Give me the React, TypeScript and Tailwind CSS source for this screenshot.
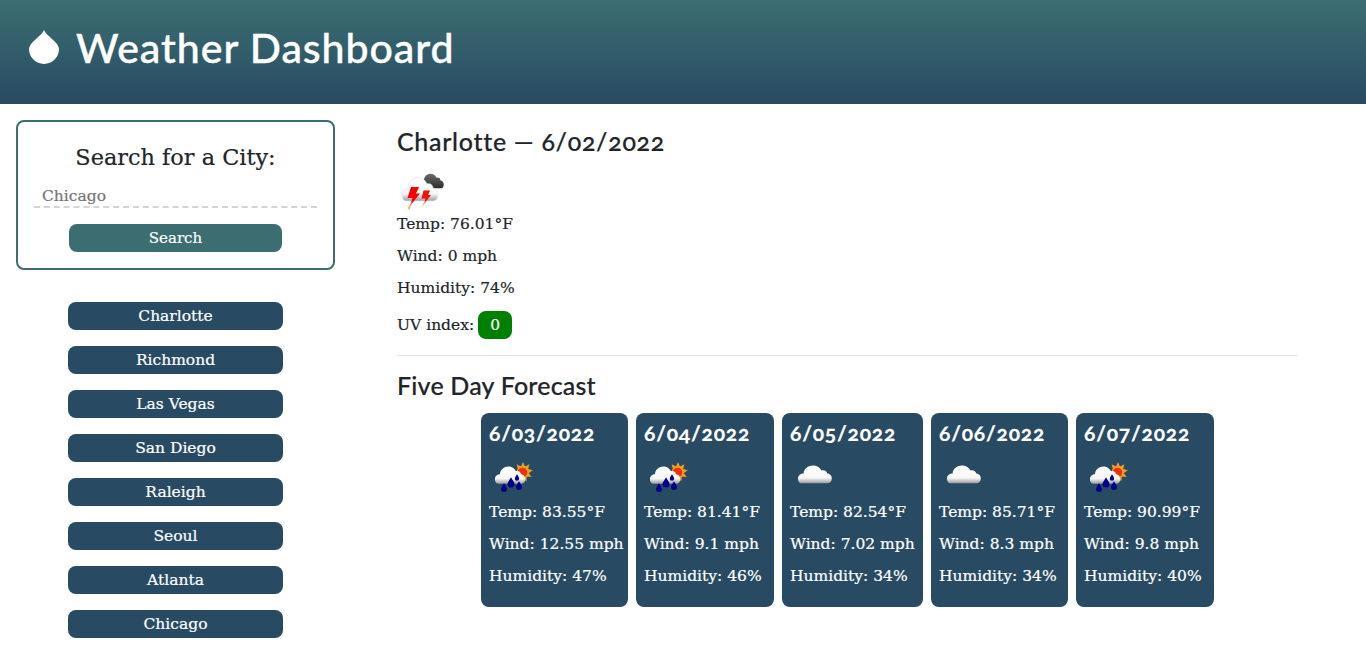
const serif = "font-['DejaVu_Serif',serif]";

function Cloud({ fill, stroke }: { fill?: string; stroke?: string }) {
  return (
    <path
      fill={fill}
      stroke={stroke}
      strokeWidth={stroke ? 0.7 : 0}
      d="M4 24 C1 24 0 21 0 18 C0 14 3 12 6 12 C6 6 11 2 16 2 C20 2 23 4 25 8 C28 7 31 9 31 12 C34 12 36 15 36 18 C36 22 34 24 31 24 Z"
    />
  );
}

function Defs() {
  return (
    <defs>
      <linearGradient id="wc" x1="0" y1="0" x2="0" y2="1">
        <stop offset="0" stopColor="#ffffff" />
        <stop offset="0.7" stopColor="#f7f7f7" />
        <stop offset="1" stopColor="#9c9c9c" />
      </linearGradient>
      <linearGradient id="dc" x1="0" y1="0" x2="0" y2="1">
        <stop offset="0" stopColor="#6b6b6b" />
        <stop offset="1" stopColor="#2b2b2b" />
      </linearGradient>
    </defs>
  );
}

function ThunderIcon() {
  return (
    <svg width="50" height="54" viewBox="0 0 50 54" className="-mb-[4px] block">
      <Defs />
      <g transform="translate(23 15.5) scale(0.66 0.66)">
        <Cloud fill="url(#dc)" />
      </g>
      <g transform="translate(5 18.5) scale(1 1.06)">
        <Cloud fill="url(#wc)" stroke="#e4e4e4" />
      </g>
      <path d="M14 30 L22 30 L19 36.5 L23 36.5 L13 49 L15.5 41 L10.5 41 Z" fill="#f80000" />
      <path d="M13 48 L15.5 44 L12.5 53 L10.5 51 Z" fill="#f8b060" />
      <path d="M26.5 33.5 L33 33.5 L31 38 L34 38 L27 47 L28.5 41.5 L24.5 41.5 Z" fill="#f41000" />
      <path d="M26.5 46 L28.5 44.5 L25 51 Z" fill="#f8b060" />
    </svg>
  );
}

function RainIcon() {
  const drops: [number, number, number][] = [
    [15, 44, 3],
    [22, 39, 3.5],
    [30, 42, 3],
    [28, 33.5, 2.2],
  ];
  return (
    <svg width="50" height="50" viewBox="0 0 50 50" className="block">
      <Defs />
      <g fill="#f0a020">
        {[0, 40, 80, 120, 160, 320].map((a) => (
          <path key={a} d="M34 17 L36 21.5 L32 21.5 Z" transform={`rotate(${a} 34 27)`} />
        ))}
      </g>
      <circle cx="34" cy="27" r="6.2" fill="#f0a020" />
      <circle cx="33.5" cy="27.5" r="4.8" fill="#f03000" />
      <g transform="translate(6 20) scale(0.84 0.78)">
        <Cloud fill="url(#wc)" />
      </g>
      {drops.map(([x, y, r], i) => (
        <path
          key={i}
          d={`M${x} ${y - r * 1.9} C${x + r * 0.5} ${y - r} ${x + r} ${y - r * 0.4} ${x + r} ${y} A${r} ${r} 0 1 1 ${x - r} ${y} C${x - r} ${y - r * 0.4} ${x - r * 0.5} ${y - r} ${x} ${y - r * 1.9} Z`}
          fill="#00008c"
        />
      ))}
    </svg>
  );
}

function CloudIcon() {
  return (
    <svg width="50" height="50" viewBox="0 0 50 50" className="block">
      <Defs />
      <g transform="translate(8 19) scale(0.94 0.8)">
        <Cloud fill="url(#wc)" />
      </g>
    </svg>
  );
}

const cities = ["Charlotte", "Richmond", "Las Vegas", "San Diego", "Raleigh", "Seoul", "Atlanta", "Chicago"];

const days = [
  { date: "6/03/2022", icon: "rain", temp: "83.55", wind: "12.55", hum: "47", w: "w-[147px]" },
  { date: "6/04/2022", icon: "rain", temp: "81.41", wind: "9.1", hum: "46", w: "w-[138px]" },
  { date: "6/05/2022", icon: "cloud", temp: "82.54", wind: "7.02", hum: "34", w: "w-[141px]" },
  { date: "6/06/2022", icon: "cloud", temp: "85.71", wind: "8.3", hum: "34", w: "w-[137px]" },
  { date: "6/07/2022", icon: "rain", temp: "90.99", wind: "9.8", hum: "40", w: "w-[138px]" },
];

export default function App() {
  return (
    <div className={`min-h-[670px] bg-white text-[#212529] ${serif} text-[15.5px] [-webkit-text-stroke:0.2px]`}>
      <header className="flex h-[104px] items-center gap-[17px] bg-gradient-to-b from-[#3c6e71] to-[#284b63] pl-[29px] font-['Lato',sans-serif] text-white">
        <svg width="30" height="34" viewBox="0 0 30 34" className="mt-[-10px]">
          <path d="M15 0 C17 6 30 12 30 19 A15 15 0 0 1 0 19 C0 12 13 6 15 0 Z" fill="#fff" />
        </svg>
        <h1 className="mb-[8px] text-[41px] font-medium leading-[48px] tracking-[0.95px] [-webkit-text-stroke:0.4px_white]">Weather Dashboard</h1>
      </header>

      <div className="flex">
        <aside className="w-[351px] shrink-0 px-[16px] pt-[16px]">
          <div className="flex h-[150px] flex-col items-center rounded-[8px] border-2 border-[#3c6e71] px-[16px] pt-[15px]">
            <div className="text-[22.4px] leading-[40px]">Search for a City:</div>
            <div className="mt-[3px] h-[28px] w-[283px] whitespace-nowrap border-b-2 border-dashed border-[#d4d4d4] pl-[8px] text-[15.5px] leading-[33px] text-[#757575]">
              Chicago
            </div>
            <button className="mt-[16px] h-[28px] w-[213px] rounded-[8px] bg-[#3c6e71] pt-[1px] text-[15px] text-white">Search</button>
          </div>
          <div className="mt-[32px] flex flex-col items-center gap-[16px]">
            {cities.map((c) => (
              <button key={c} className="h-[28px] w-[215px] rounded-[8px] bg-[#284b63] pt-[1px] text-[15.5px] font-normal text-white">
                {c}
              </button>
            ))}
          </div>
        </aside>

        <main className="w-[947px] pl-[46px] pt-[22px]">
          <h2 className="font-['Lato',sans-serif] text-[25px] font-medium leading-[31px] oldstyle-nums tracking-[0.7px]">Charlotte — 6/02/2022</h2>
          <ThunderIcon />
          <p className="pt-[2px] leading-[30px]">Temp: 76.01°F</p>
          <p className="pt-[2px] leading-[30px]">Wind: 0 mph</p>
          <p className="pt-[2px] leading-[30px]">Humidity: 74%</p>
          <div className="mt-[8px] flex h-[28px] items-center gap-[4px]">
            <span className="pt-[1px]">UV index:</span>
            <span className="flex h-[28px] w-[34px] items-center justify-center rounded-[8px] bg-[#008000] pt-[1px] text-white">0</span>
          </div>
          <hr className="mt-[16px] border-[#e3e3e3]" />
          <h2 className="mt-[14px] font-['Lato',sans-serif] text-[25px] font-medium leading-[31px] tracking-[0.2px]">Five Day Forecast</h2>
          <div className="mt-[12px] flex justify-center gap-[8px]">
            {days.map((d) => (
              <div key={d.date} className={`${d.w} h-[194px] overflow-hidden rounded-[8px] bg-[#284b63] pl-[8px] pt-[8px] text-white`}>
                <div className="font-['Lato',sans-serif] text-[21px] font-bold leading-[24px] oldstyle-nums tracking-[0.8px]">{d.date}</div>
                {d.icon === "rain" ? <RainIcon /> : <CloudIcon />}
                <p className="whitespace-nowrap pt-[2px] leading-[30px]">Temp: {d.temp}°F</p>
                <p className="whitespace-nowrap pt-[2px] leading-[30px]">Wind: {d.wind} mph</p>
                <p className="whitespace-nowrap pt-[2px] leading-[30px]">Humidity: {d.hum}%</p>
              </div>
            ))}
          </div>
        </main>
      </div>
    </div>
  );
}
